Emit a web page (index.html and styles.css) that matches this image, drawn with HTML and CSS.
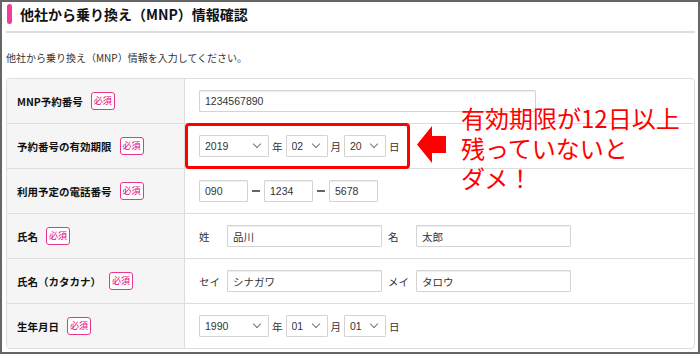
FILE: index.html
```html
<!DOCTYPE html>
<html lang="ja">
<head>
    <meta charset="UTF-8">
    <meta name="viewport" content="width=device-width, initial-scale=1.0">
    <title>他社から乗り換え（MNP）情報確認</title>
    <link rel="stylesheet" href="styles.css">
</head>
<body>
    <div class="page">
        <h1 class="title"><span class="title-bar"></span>他社から乗り換え（MNP）情報確認</h1>
        <p class="intro">他社から乗り換え（MNP）情報を入力してください。</p>

        <div class="form-table">
            <div class="row">
                <div class="label">MNP予約番号<span class="badge">必須</span></div>
                <div class="value">
                    <input class="field field-long" type="text" value="1234567890">
                </div>
            </div>
            <div class="row">
                <div class="label">予約番号の有効期限<span class="badge">必須</span></div>
                <div class="value">
                    <span class="select select-year"><select><option>2019</option></select></span>
                    <span class="unit">年</span>
                    <span class="select"><select><option>02</option></select></span>
                    <span class="unit">月</span>
                    <span class="select"><select><option>20</option></select></span>
                    <span class="unit">日</span>
                </div>
            </div>
            <div class="row">
                <div class="label">利用予定の電話番号<span class="badge">必須</span></div>
                <div class="value">
                    <input class="field field-tel" type="text" value="090">
                    <span class="dash"></span>
                    <input class="field field-tel" type="text" value="1234">
                    <span class="dash"></span>
                    <input class="field field-tel" type="text" value="5678">
                </div>
            </div>
            <div class="row">
                <div class="label">氏名<span class="badge">必須</span></div>
                <div class="value">
                    <span class="name-label">姓</span>
                    <input class="field field-name" type="text" value="品川">
                    <span class="name-label name-label-2">名</span>
                    <input class="field field-name" type="text" value="太郎">
                </div>
            </div>
            <div class="row">
                <div class="label">氏名（カタカナ）<span class="badge">必須</span></div>
                <div class="value">
                    <span class="name-label">セイ</span>
                    <input class="field field-name" type="text" value="シナガワ">
                    <span class="name-label name-label-2">メイ</span>
                    <input class="field field-name" type="text" value="タロウ">
                </div>
            </div>
            <div class="row">
                <div class="label">生年月日<span class="badge">必須</span></div>
                <div class="value">
                    <span class="select select-year"><select><option>1990</option></select></span>
                    <span class="unit">年</span>
                    <span class="select"><select><option>01</option></select></span>
                    <span class="unit">月</span>
                    <span class="select"><select><option>01</option></select></span>
                    <span class="unit">日</span>
                </div>
            </div>
        </div>

        <!-- annotation drawn over the form -->
        <div class="note-box"></div>
        <svg class="note-arrow" width="30" height="38" viewBox="0 0 30 38">
            <polygon points="0,18.5 15,0 15,10 29,10 29,27 15,27 15,37" fill="#f00"/>
        </svg>
        <div class="note-text">
            <div class="note-line">有効期限が12日以上</div>
            <div class="note-line">残っていないと</div>
            <div class="note-line">ダメ！</div>
        </div>
    </div>
</body>
</html>
```

FILE: styles.css
```css
body {
    margin: 0;
    font-family: "Noto Sans CJK JP", "Noto Sans", sans-serif;
    color: #333;
    background-color: #fff;
}

.page {
    position: relative;
    width: 700px;
    height: 354px;
    border: 2px solid #666;
    box-sizing: border-box;
    overflow: hidden;
}

.title {
    display: flex;
    align-items: center;
    height: 20px;
    margin: 2px 3px 0 4px;
    padding-bottom: 7px;
    border-bottom: 2px solid #ddd;
    font-size: 14px;
    font-weight: bold;
    color: #111;
    line-height: 20px;
}

.title-bar {
    width: 5px;
    height: 20px;
    margin: 0 8px 0 1px;
    border-radius: 3px;
    background-color: #ee3d96;
}

.intro {
    margin: 18px 0 0 4px;
    font-size: 10px;
    line-height: 14px;
    color: #333;
}

.form-table {
    margin: 13px 3px 0 4px;
    border: 1px solid #ddd;
    border-radius: 4px;
    overflow: hidden;
}

.row {
    display: flex;
    height: 44px;
}

.row + .row {
    border-top: 1px solid #ddd;
}

.label {
    display: flex;
    align-items: center;
    width: 167px;
    padding-left: 10px;
    border-right: 1px solid #ddd;
    background-color: #f5f5f5;
    font-size: 10.5px;
    font-weight: bold;
    color: #111;
}

.badge {
    display: inline-block;
    margin-left: 8px;
    padding: 0 2px;
    height: 16px;
    line-height: 16px;
    border: 1px solid #e8388e;
    border-radius: 3px;
    font-size: 9px;
    font-weight: normal;
    color: #e4007f;
    background-color: #fff;
}

.value {
    display: flex;
    align-items: center;
    flex: 1;
    padding-left: 14px;
    font-size: 10.5px;
    color: #333;
}

.field {
    height: 22px;
    padding: 0 0 0 5px;
    box-sizing: border-box;
    border: 1px solid #d4d4d4;
    border-radius: 1px;
    box-shadow: inset 0 1px 1px #eee;
    font-family: "Liberation Sans", "Noto Sans CJK JP", sans-serif;
    font-size: 10.5px;
    color: #333;
}

.field-long {
    width: 337px;
}

.field-tel {
    width: 49px;
}

.field-name {
    width: 155px;
    font-family: "Noto Sans CJK JP", sans-serif;
}

.dash {
    display: inline-block;
    width: 8px;
    height: 2px;
    margin: 0 4px 0 4px;
    background-color: #666;
}

.name-label {
    width: 28px;
}

.name-label-2 {
    margin-left: 6px;
}

.select {
    position: relative;
    display: inline-block;
}

.select select {
    width: 42px;
    height: 22px;
    padding: 0 0 0 5px;
    border: 1px solid #d4d4d4;
    border-radius: 1px;
    background-color: #fff;
    font-family: "Liberation Sans", sans-serif;
    font-size: 10.5px;
    color: #333;
    -webkit-appearance: none;
    appearance: none;
}

.select-year select {
    width: 70px;
}

.select::after {
    content: "";
    position: absolute;
    right: 9px;
    top: 6px;
    width: 5px;
    height: 5px;
    border-right: 1px solid #777;
    border-bottom: 1px solid #777;
    transform: rotate(45deg);
    pointer-events: none;
}

.unit {
    margin: 0 3px 0 3px;
    font-size: 10.5px;
}

.note-box {
    position: absolute;
    left: 183px;
    top: 121px;
    width: 225px;
    height: 46px;
    border: 3px solid #f00;
    border-radius: 4px;
    box-sizing: border-box;
}

.note-arrow {
    position: absolute;
    left: 415px;
    top: 124px;
}

.note-text {
    position: absolute;
    left: 459px;
    top: 103px;
    font-size: 24px;
    color: #f00;
}

.note-line {
    height: 30px;
    line-height: 26px;
}
```
